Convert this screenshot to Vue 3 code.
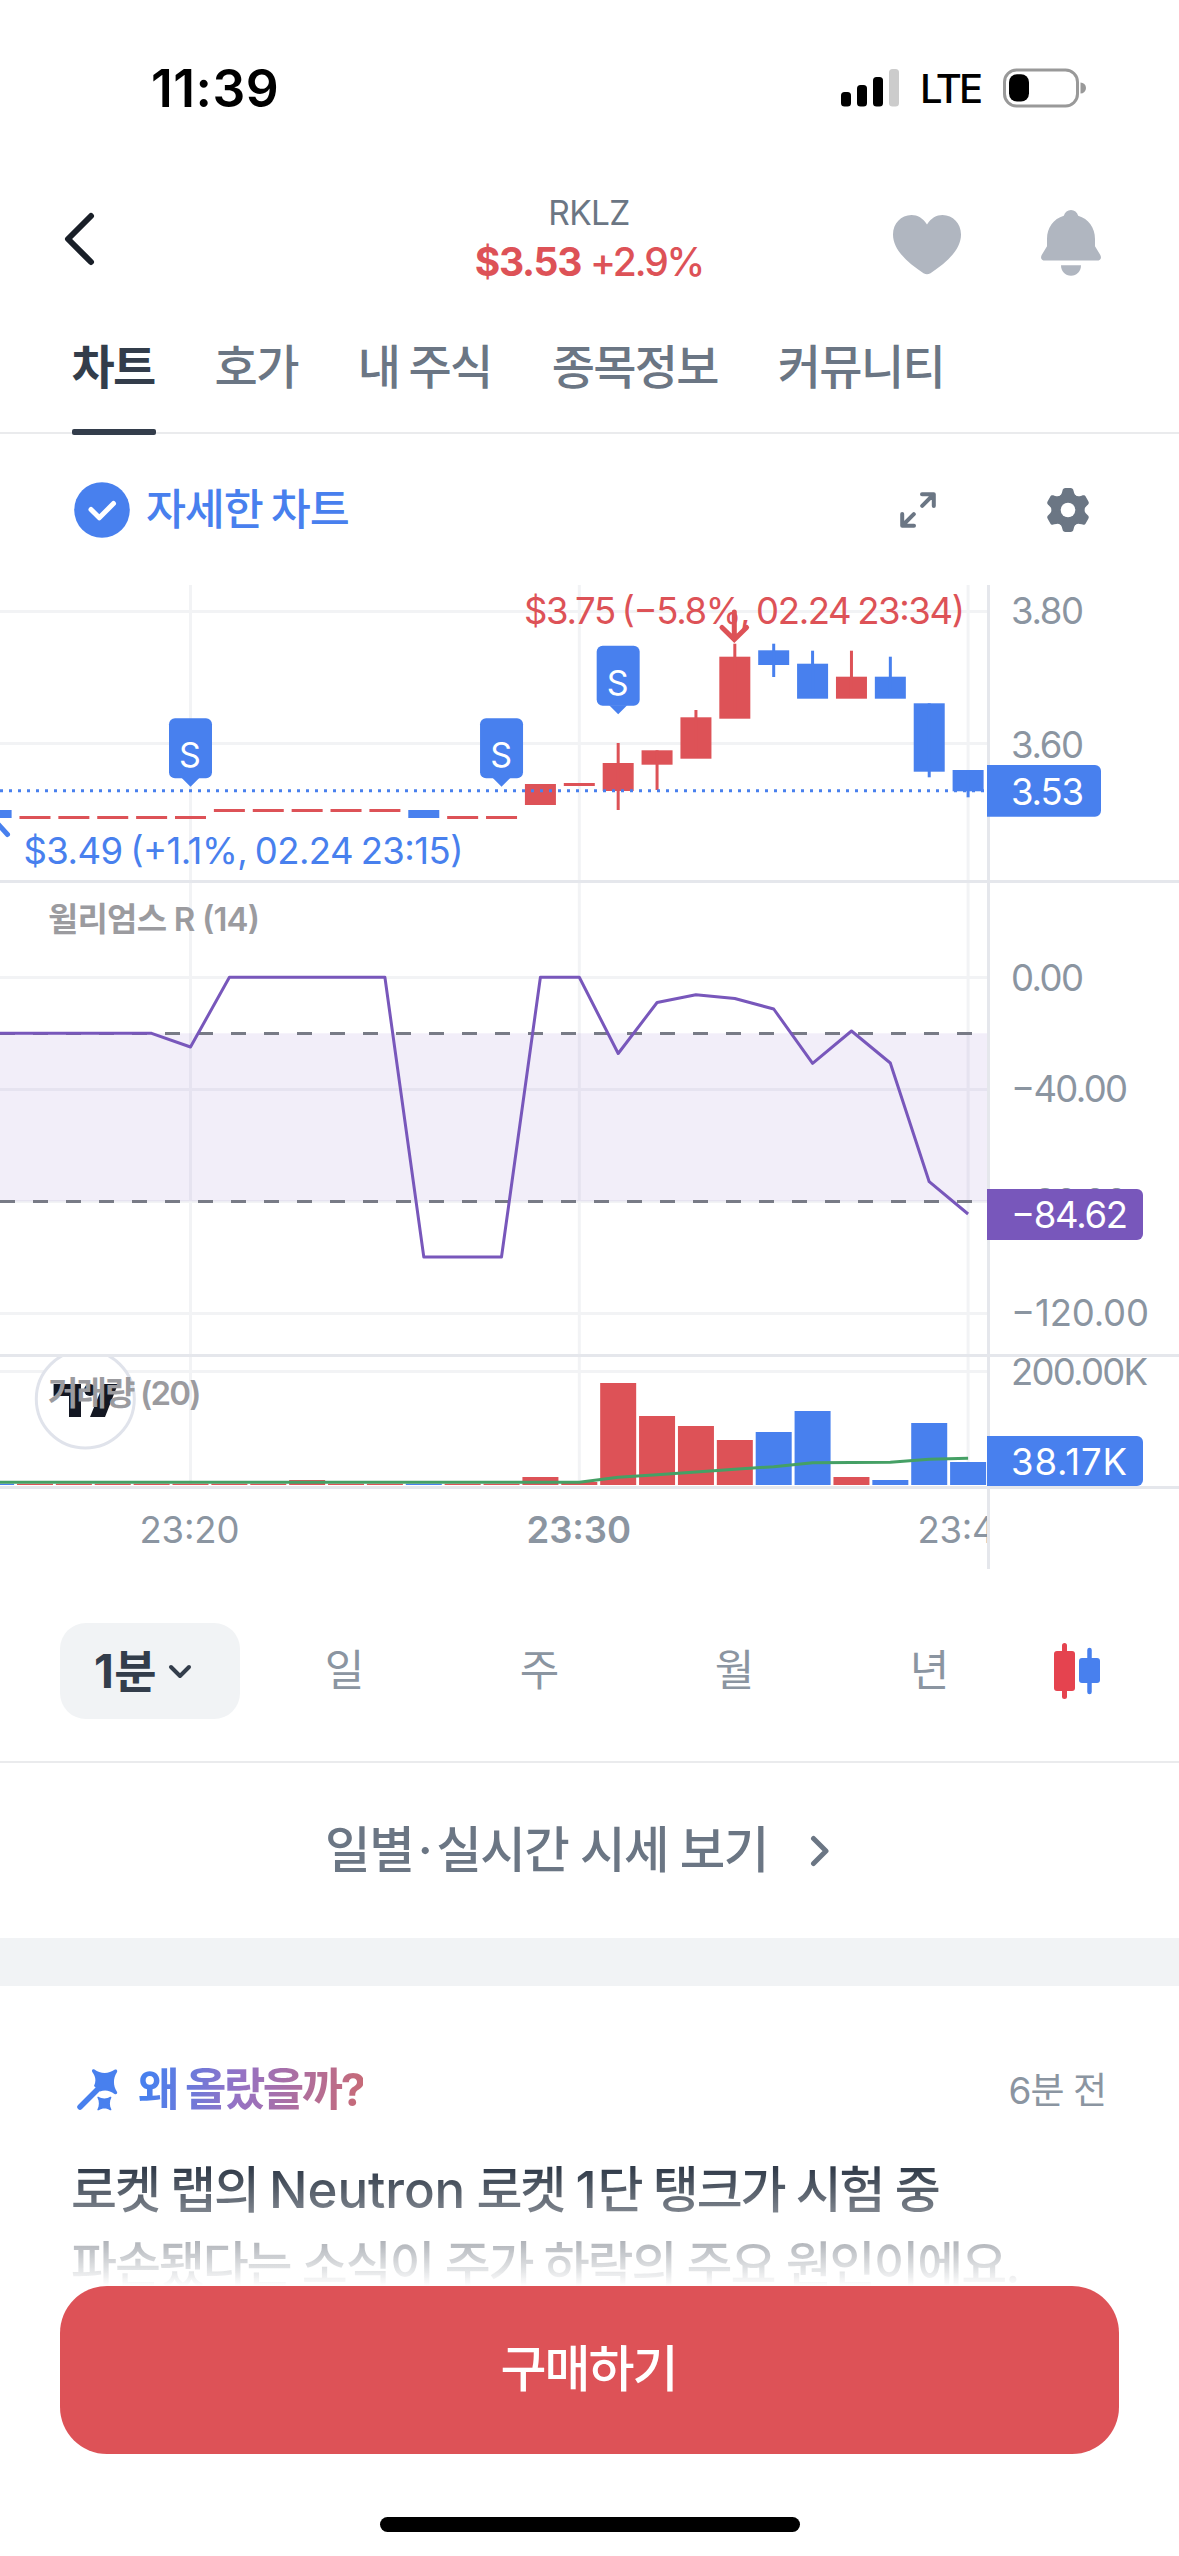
<script setup>
const tabs = ['차트', '호가', '내 주식', '종목정보', '커뮤니티']
const periods = ['일', '주', '월', '년']

const RED = '#dd5257'
const BLUE = '#4880ee'
const STEP = 38.88
const cx = (i) => 190.5 + STEP * i

// [index, up, bodyTop, bodyBottom, wickTop, wickBottom]
const candles = [
  [-5, 0, 810, 818], [-4, 1, 816, 819], [-3, 1, 816, 819], [-2, 1, 816, 819],
  [-1, 1, 816, 819], [0, 1, 816, 819], [1, 1, 809, 812], [2, 1, 809, 812],
  [3, 1, 809, 812], [4, 1, 809, 812], [5, 1, 809, 812], [6, 0, 810, 818],
  [7, 1, 816, 819], [8, 1, 816, 819], [9, 1, 784, 805], [10, 1, 783, 786],
  [11, 1, 763, 791, 743, 810], [12, 1, 750.3, 764.7, 750.3, 790],
  [13, 1, 717.3, 758.7, 710, 758], [14, 1, 656.7, 718.7, 643.7, 718],
  [15, 0, 650.3, 665, 643.7, 677], [16, 0, 663.7, 698.7, 650.7, 698],
  [17, 1, 676.7, 698.7, 650.7, 698], [18, 0, 676.7, 698.7, 656.7, 698],
  [19, 0, 703.3, 771.7, 703.3, 777.3], [20, 0, 770, 791.3, 770, 797.3],
].map(([i, up, t, b, wt, wb]) => ({ x: cx(i), fill: up ? RED : BLUE, t, b, wt, wb }))

// [index, up, top]
const volumes = [
  [-5, 0, 1483.7], [-4, 1, 1483.7], [-3, 1, 1483.7], [-2, 1, 1483.7], [-1, 1, 1483.7],
  [0, 1, 1483.7], [1, 1, 1483.7], [2, 1, 1483.7], [3, 1, 1480], [4, 1, 1483.7],
  [5, 1, 1483.7], [6, 0, 1483.7], [7, 1, 1483.7], [8, 1, 1483.7], [9, 1, 1477],
  [10, 1, 1482], [11, 1, 1383], [12, 1, 1416], [13, 1, 1426], [14, 1, 1440],
  [15, 0, 1432], [16, 0, 1411], [17, 1, 1477], [18, 0, 1480], [19, 0, 1423], [20, 0, 1462],
].map(([i, up, t]) => ({ x: cx(i) - 18, t, fill: up ? RED : BLUE }))

const toPoints = (list) => list.map(([i, y]) => `${cx(i).toFixed(1)},${y}`).join(' ')
const williams = toPoints([
  [-5, 1033.3], [-1, 1033.3], [0, 1047], [1, 977.3], [5, 977.3], [6, 1257], [8, 1257],
  [9, 977.3], [10, 977.3], [11, 1053.5], [12, 1002.5], [13, 994.7], [14, 998.5],
  [15, 1009], [16, 1063.3], [17, 1031], [18, 1063], [19, 1181.7], [20, 1214],
])
const volumeAvg = toPoints([
  [-5, 1482.3], [10, 1482.3], [11, 1477.3], [12, 1474.7], [13, 1472], [14, 1469.3],
  [15, 1466.7], [16, 1462.7], [17, 1462.5], [18, 1462.3], [19, 1459.3], [20, 1458.3],
])

const markers = [
  { x: cx(0), y: 718.3 },
  { x: cx(8), y: 718.3 },
  { x: cx(11), y: 645.7 },
]
const axisLabels = [
  { t: '3.80', y: 624, w: 73 }, { t: '3.60', y: 757.5, w: 73 },
  { t: '0.00', y: 990.7, w: 73 }, { t: '−40.00', y: 1102.3, w: 117 },
  { t: '−80.00', y: 1214.6, w: 117 }, { t: '−120.00', y: 1325.7, w: 138 },
  { t: '200.00K', y: 1385, w: 137 },
]
const tags = [
  { t: '3.53', top: 765, h: 51.7, w: 114, y: 804.7, tw: 73, fill: BLUE },
  { t: '−84.62', top: 1189, h: 51, w: 156, y: 1228, tw: 117, fill: '#7857bb' },
  { t: '38.17K', top: 1436, h: 50, w: 156, y: 1475, tw: 116, fill: BLUE },
]
</script>

<template>
  <div class="screen">
    <div class="status">
      <div class="clock">11:39</div>
      <div class="status-right">
        <svg class="signal" width="58" height="38" viewBox="0 0 58 38">
          <rect x="0" y="23" width="10" height="14.5" rx="3.5" />
          <rect x="16" y="16" width="10" height="21.5" rx="3.5" />
          <rect x="32" y="8" width="10" height="29.5" rx="3.5" />
          <rect x="48" y="0" width="10" height="37.5" rx="3.5" fill="#ccc" />
        </svg>
        <span class="lte">LTE</span>
        <svg class="battery" width="83" height="40" viewBox="0 0 83 40">
          <rect x="1.5" y="2" width="73" height="36" rx="12" fill="none" stroke="#999" stroke-width="3" />
          <rect x="6" y="6.2" width="20" height="27.4" rx="8" />
          <path d="M77.500 14.500a5.500 5.500 0 0 1 0 11z" fill="#999" />
        </svg>
      </div>
    </div>

    <header class="header">
      <svg class="back" width="34" height="56" viewBox="0 0 34 56">
        <path d="M28 5L5 28l23 23" fill="none" stroke="#191f28" stroke-width="6" stroke-linecap="round" stroke-linejoin="round" />
      </svg>
      <div class="quote">
        <div class="ticker">RKLZ</div>
        <div class="price"><b>$3.53</b><span>+2.9%</span></div>
      </div>
      <div class="header-icons">
        <svg width="68" height="60" viewBox="0 0 68 60">
          <path d="M34 9.500C38 3 43.500 0 49.500 0C60 0 68 8.500 68 19.500C68 35 53 48 37.500 58.200C35 59.700 33 59.700 30.500 58.200C15 48 0 35 0 19.500C0 8.500 8 0 18.500 0C24.500 0 30 3 34 9.500Z" fill="#b0b6c0" />
        </svg>
        <svg width="60" height="66" viewBox="0 0 60 66">
          <path d="M30 0c3.500 0 6 2.200 7.200 5.800C47.500 9 54 17.500 54 29v7.200l5 8.300c2.200 3.600.4 6-3 6H4c-3.400 0-5.200-2.400-3-6l5-8.300V29C6 17.500 12.500 9 22.800 5.800C24 2.200 26.500 0 30 0z" fill="#b0b6c0" />
          <path d="M20 55.300h20c0 6-4.300 10.500-10 10.500s-10-4.500-10-10.500z" fill="#b0b6c0" />
        </svg>
      </div>
    </header>

    <nav class="tabs">
      <div v-for="(t, i) in tabs" :key="t" class="tab" :class="{ active: i === 0 }">{{ t }}</div>
    </nav>

    <div class="toolbar">
      <svg width="56" height="56" viewBox="0 0 56 56">
        <circle cx="28" cy="28" r="27.800" fill="#4880ee" />
        <path d="M17 27.500l8.300 8.300L39.500 21.500" fill="none" stroke="#fff" stroke-width="5" stroke-linecap="round" stroke-linejoin="round" />
      </svg>
      <span class="detail">자세한 차트</span>
      <svg class="expand" width="36" height="36" viewBox="0 0 36 36" fill="none" stroke="#6b7684" stroke-width="4" stroke-linecap="round" stroke-linejoin="round">
        <path d="M22 2.200h11.800V14M33 3L22.200 13.800M14 33.800H2.200V22M3 33l10.800-10.800" />
      </svg>
      <svg class="gear" width="44" height="44" viewBox="-22 -22 44 44">
        <g fill="#6b7684">
          <circle r="16.500" />
          <path v-for="a in 6" :key="a" :transform="`rotate(${a * 60})`" d="M-9.500 -13C-7 -14.500 -6.300 -16 -5.600 -19C-5.100 -21.200 -4.300 -22 -2.500 -22H2.500C4.300 -22 5.100 -21.200 5.600 -19C6.300 -16 7 -14.500 9.500 -13L0 0Z" />
        </g>
        <circle r="7.300" fill="#fff" />
      </svg>
    </div>

    <svg class="chart" width="1179" height="985" viewBox="0 585 1179 985">
      <defs>
        <clipPath id="plot"><rect x="0" y="585" width="987" height="985" /></clipPath>
        <clipPath id="volume-pane"><rect x="0" y="1357" width="1179" height="129" /></clipPath>
      </defs>

      <g stroke="#f2f3f5" stroke-width="3">
        <path d="M190.500 585V1485M579.300 585V1485M968.100 585V1485" />
        <path d="M0 611.500H987M0 743.500H987M0 977.500H987M0 1089.500H987M0 1201.500H987M0 1313.500H987M0 1371.500H987" />
      </g>
      <rect x="0" y="1033.300" width="987" height="168" fill="#7e57c2" fill-opacity="0.1" />
      <path d="M0 1033.500H975M0 1201.500H975" stroke="#787b86" stroke-width="3" stroke-dasharray="15 18" />

      <g clip-path="url(#plot)">
        <g v-for="c in candles" :key="c.x" :fill="c.fill">
          <rect :x="c.x - 15.5" :y="c.t" width="31" :height="c.b - c.t" />
          <rect v-if="c.wt" :x="c.x - 1.5" :y="c.wt" width="3" :height="c.wb - c.wt" />
        </g>
        <path d="M0 790.700H987" stroke="#4880ee" stroke-width="3" stroke-dasharray="3 6" />
        <polyline :points="williams" fill="none" stroke="#7857bb" stroke-width="3" stroke-linejoin="round" />
        <path d="M-2 824L7.500 834.500" stroke="#4880ee" stroke-width="5" stroke-linecap="round" />
      </g>

      <g v-for="m in markers" :key="m.x">
        <rect :x="m.x - 21.5" :y="m.y" width="43" height="60" rx="6" fill="#4880ee" />
        <path :d="`M${m.x - 9} ${m.y + 59.5}h18l-9 9z`" fill="#4880ee" />
        <text :x="m.x - 0.5" :y="m.y + 49" text-anchor="middle" font-size="34" fill="#fff">S</text>
      </g>

      <text x="524" y="624" fill="#dd5257" textLength="441" class="num caption">$3.75 (−5.8%, 02.24 23:34)</text>
      <path d="M734.300 612V639M722 627.500L734.300 639.500L746.600 627.500" fill="none" stroke="#dd5257" stroke-width="5" stroke-linecap="round" />
      <text x="23.500" y="864.300" fill="#4880ee" textLength="440" class="num caption">$3.49 (+1.1%, 02.24 23:15)</text>
      <text x="48" y="930.500" textLength="212" class="study">윌리엄스 R (14)</text>

      <g clip-path="url(#volume-pane)">
        <rect v-for="v in volumes" :key="v.x" :x="v.x" :y="v.t" width="36" :height="1485 - v.t" :fill="v.fill" />
        <polyline :points="volumeAvg" fill="none" stroke="#45a065" stroke-width="3" stroke-linejoin="round" />
        <circle cx="85.300" cy="1399" r="49" fill="#fff" stroke="#e0e3eb" stroke-width="3" />
        <g fill="#131722">
          <path d="M53.600 1384H81V1417H69V1396H53.600Z" />
          <circle cx="90" cy="1390" r="6" />
          <path d="M103.500 1384H118L105 1417H90Z" />
        </g>
      </g>
      <text x="48" y="1405" textLength="153.500" class="study">거래량 (20)</text>

      <g fill="#8b95a1" class="num">
        <text v-for="a in axisLabels" :key="a.t" x="1011" :y="a.y" :textLength="a.w">{{ a.t }}</text>
        <text x="139.500" y="1543" textLength="100">23:20</text>
        <text x="526.500" y="1543" textLength="104.500" font-weight="600">23:30</text>
        <text x="917.500" y="1543" textLength="101" clip-path="url(#plot)">23:40</text>
      </g>

      <path d="M988.500 585V1569" stroke="#e5e7ec" stroke-width="3" />
      <path d="M0 881.500H1179M0 1355.500H1179M0 1487.500H1179" stroke="#e5e7ec" stroke-width="3" />

      <g v-for="t in tags" :key="t.t">
        <path :d="`M987 ${t.top}h${t.w - 6}a6 6 0 0 1 6 6v${t.h - 12}a6 6 0 0 1 -6 6h-${t.w - 6}z`" :fill="t.fill" />
        <text x="1011" :y="t.y" fill="#fff" class="num" :textLength="t.tw">{{ t.t }}</text>
      </g>
    </svg>

    <div class="periods">
      <div class="pill">
        <span>1분</span>
        <svg width="24" height="15" viewBox="0 0 24 15"><path d="M3 3l9 9 9-9" fill="none" stroke="#333d4b" stroke-width="4" stroke-linecap="round" stroke-linejoin="round" /></svg>
      </div>
      <div v-for="p in periods" :key="p" class="period">{{ p }}</div>
      <svg class="candle-icon" width="46" height="56" viewBox="0 0 46 56">
        <path d="M10.500 2.500v51" stroke="#e5434f" stroke-width="5" stroke-linecap="round" />
        <rect x="0" y="8" width="21" height="40" rx="3" fill="#e5434f" />
        <path d="M35.500 7v42" stroke="#4880ee" stroke-width="4.500" stroke-linecap="round" />
        <rect x="25" y="15" width="21" height="25" rx="3" fill="#4880ee" />
      </svg>
    </div>

    <div class="more">
      <span class="more-text">일별<span class="dot">·</span>실시간 시세 보기</span>
      <svg width="20" height="32" viewBox="0 0 20 32"><path d="M3.500 3.500L16 16 3.500 28.500" fill="none" stroke="#6b7684" stroke-width="5" stroke-linecap="round" stroke-linejoin="round" /></svg>
    </div>

    <div class="divider"></div>

    <section class="news">
      <div class="news-head">
        <svg width="42" height="42" viewBox="0 0 42 42" fill="#4880ee">
          <path d="M4 38L23 19" stroke="#4880ee" stroke-width="5.500" stroke-linecap="round" />
          <path d="M18.500 .5C24 5 33 5 38.500 .8C40.500 -.3 42 1.500 40.800 3.500C37 9 37 17 40.800 22.500C42 24.500 40.500 26 38.500 25C34 21.500 29 20.500 24 22.500L18 17C20.500 12 19.500 7 16.300 3C15.200 1 16.800 -.5 18.500 .5Z" />
          <path d="M22.500 27.800C26 30 31 30 34 27.800C35 27.300 35.800 28 35.200 29C33.500 32 33.500 37 35.200 40C35.800 41 35 41.700 34 41.200C31 39 26 39 22.800 41.200C21.500 41.700 21 41 21.600 40C23.300 37 23.300 32 21.600 29C21 28 21.500 27.300 22.500 27.800Z" />
        </svg>
        <span class="why">왜 올랐을까?</span>
        <span class="ago">6분 전</span>
      </div>
      <p class="headline">로켓 랩의 <span class="latin">Neutron</span> 로켓 <span class="latin digit">1</span>단 탱크가 시험 중<br />파손됐다는 소식이 주가 하락의 주요 원인이에요.</p>
    </section>

    <footer class="footer">
      <button class="buy">구매하기</button>
      <div class="home"></div>
    </footer>
  </div>
</template>

<style>
body {
  margin: 0;
  background: #fff;
}
</style>

<style scoped>
.screen {
  position: relative;
  width: 1179px;
  height: 2556px;
  overflow: hidden;
  background: #fff;
  font-family: Inter, 'Noto Sans CJK KR', sans-serif;
  color: #333d4b;
  display: flex;
  flex-direction: column;
}
.screen > * {
  flex-shrink: 0;
  box-sizing: border-box;
}
.status {
  height: 177px;
  padding: 0 93px 0 151px;
  display: flex;
  justify-content: space-between;
  color: #000;
}
.clock {
  margin-top: 58px;
  height: 60px;
  line-height: 60px;
  font-size: 51.5px;
  font-weight: 600;
  letter-spacing: 0.5px;
}
.status-right {
  display: flex;
  align-items: center;
  height: 60px;
  margin-top: 58px;
}
.lte {
  margin: 2px 20px 0 21px;
  width: 63px;
  font-size: 40px;
  line-height: 60px;
  font-weight: 500;
  letter-spacing: -3px;
}
.header {
  height: 123px;
  display: flex;
  padding: 0 78px 0 63px;
}
.back {
  margin-top: 34px;
}
.quote {
  width: 300px;
  margin-left: 342px;
  margin-right: auto;
  text-align: center;
}
.ticker {
  margin-top: 16px;
  height: 40px;
  line-height: 40px;
  font-size: 33.5px;
  color: #6b7684;
  letter-spacing: -0.7px;
}
.price {
  display: flex;
  justify-content: center;
  gap: 9px;
  height: 50px;
  line-height: 50px;
  margin-top: 4px;
  font-size: 39px;
  font-weight: 500;
  color: #dd5257;
  letter-spacing: -1.3px;
}
.price span {
  letter-spacing: -2.1px;
}
.header-icons {
  display: flex;
  gap: 80px;
}
.header-icons svg:first-child {
  margin-top: 37.500px;
}
.header-icons svg:last-child {
  margin-top: 33px;
}
.tabs {
  height: 134px;
  display: flex;
  gap: 60px;
  padding-left: 71.5px;
  border-bottom: 2px solid #eaebed;
}
.tab {
  position: relative;
  height: 134px;
  line-height: 133px;
  font-size: 47px;
  font-weight: 500;
  letter-spacing: -1.7px;
  word-spacing: -1.5px;
  color: #6b7684;
}
.tab.active {
  color: #333d4b;
  font-weight: 700;
}
.tab.active::after {
  content: '';
  position: absolute;
  left: 0.5px;
  right: -1px;
  top: 129px;
  height: 6px;
  border-radius: 2px;
  background: #333d4b;
}
.toolbar {
  height: 151px;
  padding: 0 89px 0 74px;
  display: flex;
  align-items: center;
}
.detail {
  margin: -2px 0 0 16px;
  font-size: 43.5px;
  line-height: 60px;
  font-weight: 500;
  letter-spacing: -1.2px;
  word-spacing: -2px;
  color: #4880ee;
}
.expand {
  margin-left: auto;
}
.gear {
  margin-left: 110px;
}
.chart {
  display: block;
}
.num {
  font-size: 36.5px;
}
.caption {
  word-spacing: -2px;
}
.study {
  font-size: 33px;
  font-weight: 600;
  fill: #9b9b9f;
}
.periods {
  height: 193px;
  padding: 53px 79px 0 60px;
  display: flex;
  border-bottom: 2px solid #eaebed;
}
.pill {
  width: 180px;
  height: 96px;
  box-sizing: border-box;
  padding-left: 34px;
  border-radius: 26px;
  background: #f1f3f5;
  display: flex;
  align-items: center;
  gap: 11px;
  font-size: 46px;
  line-height: 94px;
  font-weight: 700;
  letter-spacing: 0.3px;
}
.period {
  width: 195px;
  margin-left: 7px;
  margin-right: -7px;
  text-align: center;
  font-size: 43px;
  line-height: 94px;
  color: #8b95a1;
}
.candle-icon {
  margin: 20px 0 0 auto;
}
.more {
  height: 175px;
  display: flex;
  align-items: center;
  justify-content: center;
  gap: 42px;
  padding-right: 24px;
  font-size: 49.5px;
  font-weight: 500;
  letter-spacing: -1.5px;
  color: #6b7684;
}
.more-text {
  line-height: 60px;
  margin-top: -2px;
}
.dot {
  margin: 0 5px 0 4.5px;
}
.divider {
  height: 48px;
  background: #f1f3f5;
}
.news {
  height: 300px;
  padding: 74px 72px 0;
}
.news-head {
  display: flex;
  align-items: center;
  height: 60px;
  padding-left: 4px;
}
.why {
  margin-left: 20px;
  font-size: 45px;
  font-weight: 700;
  line-height: 60px;
  letter-spacing: -2.5px;
  background: linear-gradient(100deg, #4880ee 6%, #9572c4 45%, #c96a74 100%);
  -webkit-background-clip: text;
  background-clip: text;
  color: transparent;
}
.ago {
  margin: 2px 1px 0 auto;
  line-height: 60px;
  font-size: 37px;
  letter-spacing: -1px;
  color: #8b95a1;
}
.headline {
  margin: 32px 0 0 -1px;
  font-size: 50px;
  line-height: 75px;
  font-weight: 500;
  letter-spacing: -2.1px;
  white-space: nowrap;
  background: linear-gradient(180deg, #333d4b 18px, rgba(51, 61, 75, 0) 134px);
  -webkit-background-clip: text;
  background-clip: text;
  color: transparent;
}
.latin {
  font-size: 51px;
  letter-spacing: -0.1px;
}
.digit {
  letter-spacing: 1px;
}
.footer {
  height: 270px;
  padding: 0 60px;
  display: flex;
  flex-direction: column;
  align-items: center;
  background: #fff;
}
.buy {
  width: 1059px;
  height: 168px;
  border: 0;
  padding: 0 2px 3px 0;
  border-radius: 47px;
  background: #dd5257;
  color: #fff;
  font-family: inherit;
  font-size: 50px;
  line-height: 60px;
  font-weight: 500;
  letter-spacing: -2px;
}
.home {
  width: 420px;
  height: 15px;
  margin-top: 63px;
  border-radius: 8px;
  background: #000;
}
</style>
